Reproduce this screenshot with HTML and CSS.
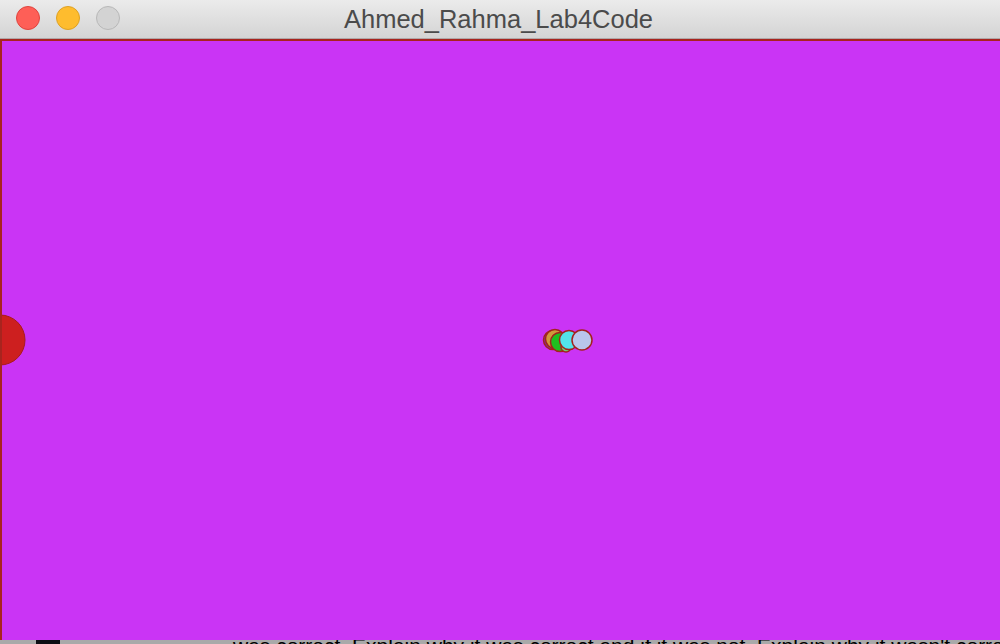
FILE: index.html
```html
<!DOCTYPE html>
<html>
<head>
<meta charset="utf-8">
<link rel="stylesheet" href="styles.css">
</head>
<body>
<div class="window">
  <div class="titlebar">
    <div class="lights">
      <span class="light close"></span>
      <span class="light min"></span>
      <span class="light zoom"></span>
    </div>
    <div class="title">Ahmed_Rahma_Lab4Code</div>
  </div>
  <div class="canvas">
    <svg class="scene" width="1000" height="601" viewBox="0 0 1000 601">
      <circle cx="0" cy="300" r="25" fill="#cd1f1f" stroke="#a71c1c" stroke-width="1"/>
      <g stroke="#a3221c" stroke-width="1.5">
        <circle cx="553" cy="300" r="9.5" fill="#7a33a8"/>
        <circle cx="555" cy="299" r="9.5" fill="#d09a3a"/>
        <circle cx="560" cy="302" r="9.5" fill="#1fbf1f"/>
        <circle cx="566" cy="307" r="5" fill="#6ed06e"/>
        <circle cx="569" cy="300" r="9.5" fill="#52e3ea"/>
        <circle cx="582" cy="300" r="10" fill="#b9c6ec"/>
      </g>
    </svg>
  </div>
  <div class="below">
    <span class="blk"></span>
    <span class="txt">was correct. Explain why it was correct and if it was not. Explain why it wasn't correct.</span>
  </div>
</div>
</body>
</html>
```

FILE: styles.css
```css
html, body {
  margin: 0;
  padding: 0;
  width: 1000px;
  height: 644px;
  overflow: hidden;
  background: #a9a9a9;
}
.window {
  display: flex;
  flex-direction: column;
  width: 1000px;
  height: 644px;
}
.titlebar {
  position: relative;
  height: 38px;
  flex: none;
  background: linear-gradient(#ebebeb, #d4d4d4);
  border-bottom: 1px solid #b0a8a8;
  display: flex;
  align-items: center;
  justify-content: center;
}
.lights {
  position: absolute;
  left: 16px;
  top: 6px;
  display: flex;
  gap: 16px;
}
.light {
  width: 24px;
  height: 24px;
  border-radius: 50%;
  box-sizing: border-box;
}
.close { background: #fe5f57; border: 1px solid #e0443e; }
.min { background: #febc2e; border: 1px solid #dea123; }
.zoom { background: #d3d3d3; border: 1px solid #b8b8b8; }
.title {
  font-family: "Liberation Sans", Arial, sans-serif;
  font-size: 25.5px;
  color: #4b4b4b;
  margin-left: -3px;
  margin-top: 1px;
}
.canvas {
  height: 601px;
  flex: none;
  background: #ca34f5;
  border-top: 2px solid #a8241e;
  border-left: 2px solid #a8241e;
  box-sizing: border-box;
  position: relative;
  overflow: hidden;
}
.scene {
  position: absolute;
  left: -2px;
  top: -1px;
}
.below {
  flex: 1;
  overflow: hidden;
  display: flex;
  align-items: flex-start;
  background: #a9a9a9;
}
.blk {
  display: block;
  margin-left: 36px;
  width: 24px;
  height: 4px;
  background: #0d0d14;
  flex: none;
}
.txt {
  margin-left: 173px;
  font-family: "Liberation Sans", Arial, sans-serif;
  font-size: 21px;
  line-height: 21px;
  margin-top: -5px;
  color: #000;
  white-space: nowrap;
}
```
